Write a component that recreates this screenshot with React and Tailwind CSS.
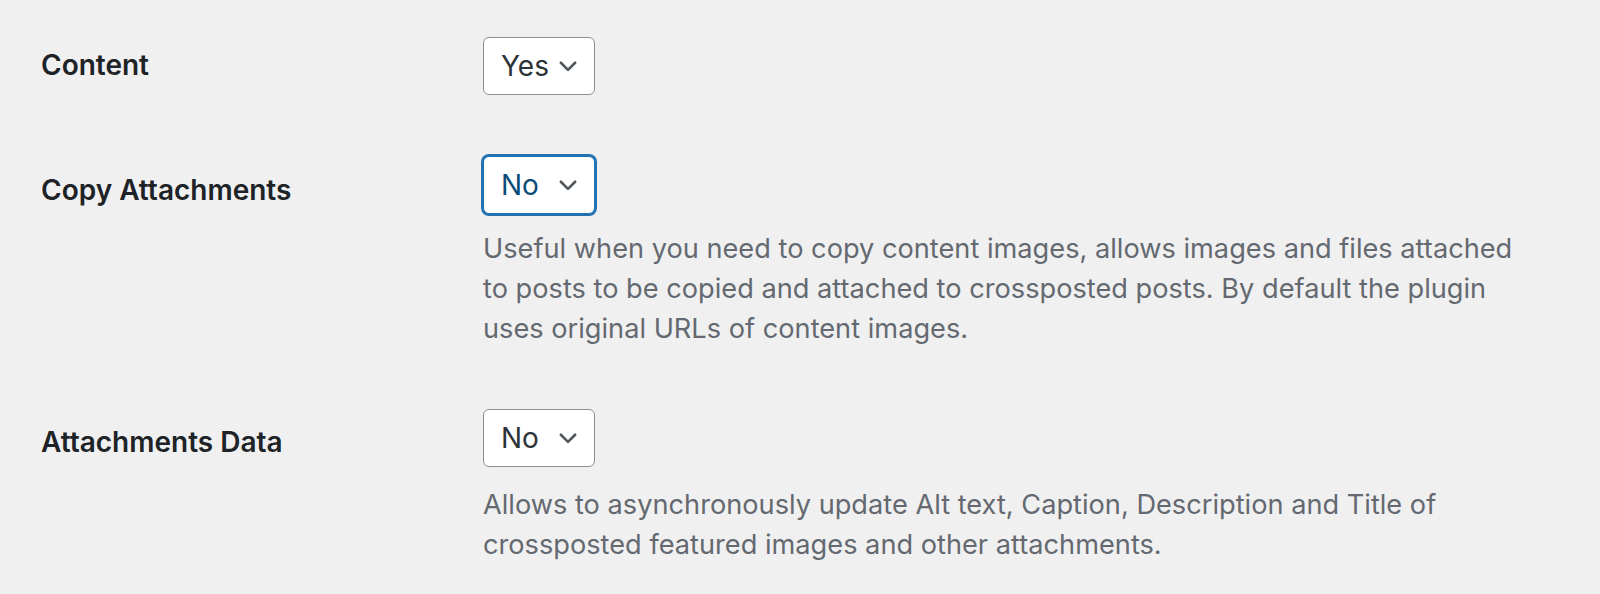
import { useState } from "react";

function Chevron() {
  return (
    <svg className="w-[22px] h-[22px] text-[#50575e]" viewBox="0 0 20 20" fill="none" stroke="currentColor" strokeWidth={2.4} strokeLinecap="round" strokeLinejoin="round">
      <path d="M3.5 7l6.5 6.5 6.5-6.5" />
    </svg>
  );
}

function Select({ value, focused }) {
  return (
    <div
      className={
        "w-[112px] h-[58px] rounded-[6px] bg-white border flex items-center justify-between pl-[17px] pr-[15px] " +
        (focused
          ? "border-[#2271b1] ring-2 ring-[#2271b1] text-[#0a4b78]"
          : "border-[#8c8f94] text-[#2c3338]")
      }
    >
      <span className="text-[28px] leading-none">{value}</span>
      <Chevron />
    </div>
  );
}

const rows = [
  { label: "Content", value: "Yes", labelTop: "pt-[47px]", fieldTop: "pt-[37px]", pb: "pb-[30px]" },
  {
    label: "Copy Attachments",
    value: "No",
    focused: true,
    labelTop: "pt-[47px]",
    fieldTop: "pt-[31px]",
    pb: "pb-[60px]",
    descTop: "mt-[15px]",
    desc: "Useful when you need to copy content images, allows images and files attached to posts to be copied and attached to crossposted posts. By default the plugin uses original URLs of content images.",
  },
  {
    label: "Attachments Data",
    value: "No",
    labelTop: "pt-[15px]",
    fieldTop: "pt-[0px]",
    pb: "pb-[20px]",
    descTop: "mt-[18px]",
    desc: "Allows to asynchronously update Alt text, Caption, Description and Title of crossposted featured images and other attachments.",
  },
];

export default function App() {
  const [data] = useState(rows);
  return (
    <div className="min-h-[594px] w-[1600px] bg-[#f0f0f1] pl-[41px] font-['Inter',sans-serif]">
      {data.map((r) => (
        <div key={r.label} className={"grid grid-cols-[442px_1fr] " + r.pb}>
          <div className={r.labelTop + " text-[28px] leading-[36px] font-semibold text-[#1d2327]"}>
            {r.label}
          </div>
          <div className={r.fieldTop}>
            <Select value={r.value} focused={r.focused} />
            {r.desc && (
              <p className={r.descTop + " w-[1040px] text-[27.2px] leading-[40px] text-[#646970]"}>
                {r.desc}
              </p>
            )}
          </div>
        </div>
      ))}
    </div>
  );
}
